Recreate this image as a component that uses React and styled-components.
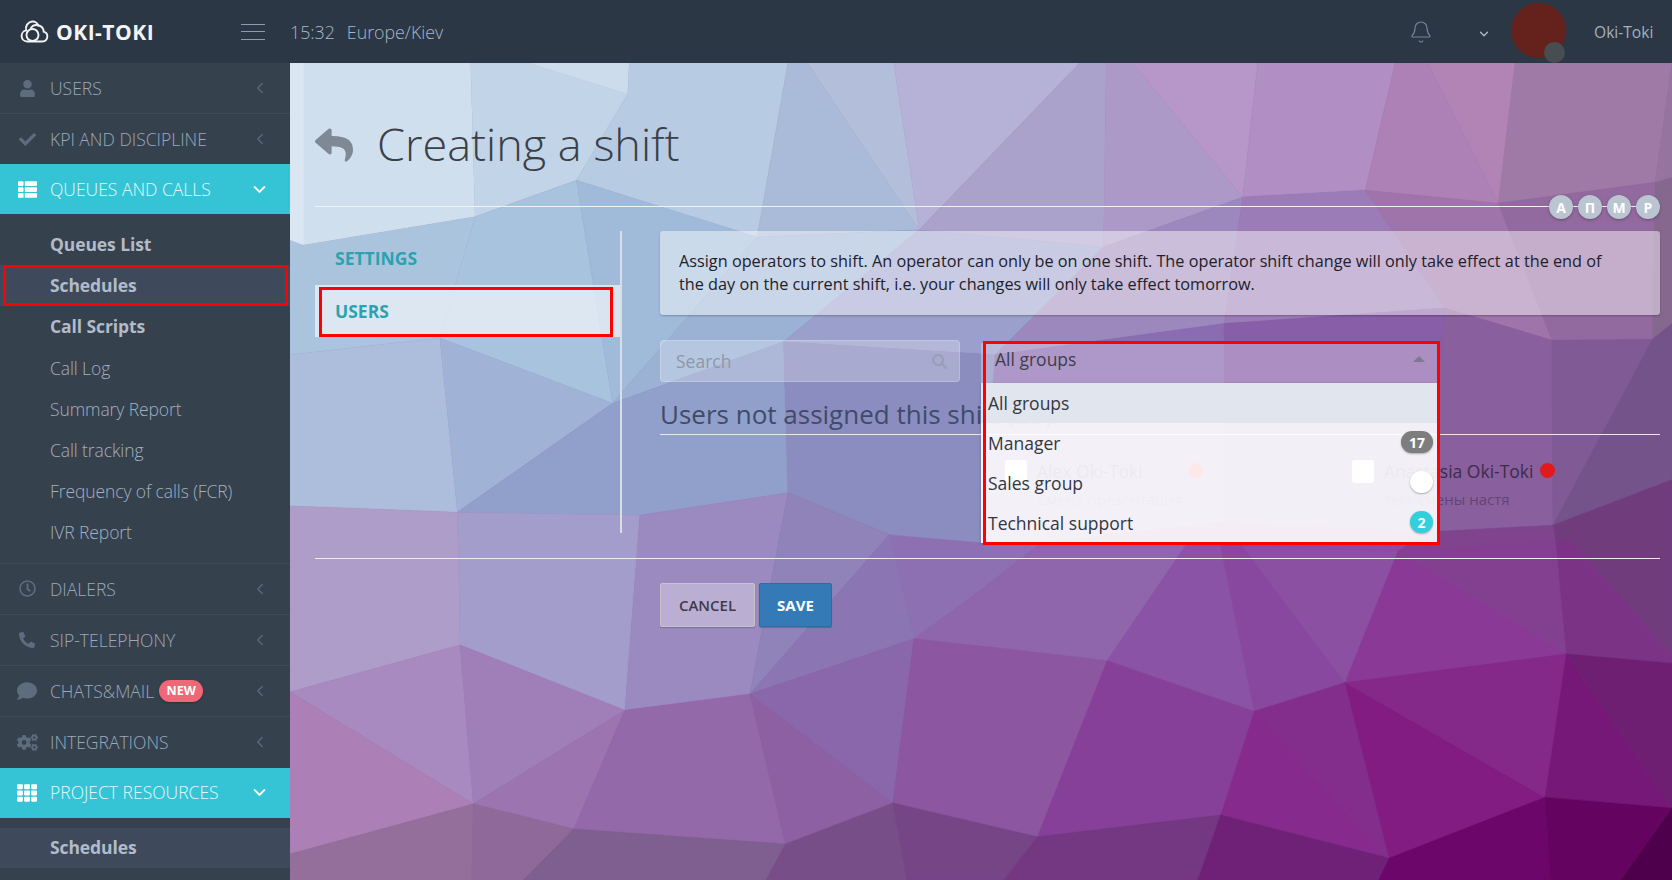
import React from 'react';
import styled, { createGlobalStyle } from 'styled-components';
import { ChevronLeft, ChevronDown, Bell } from 'lucide-react';
import { FaUser, FaCheck, FaThList, FaRegClock, FaPhoneAlt, FaComment, FaCogs, FaTh, FaReply, FaSearch } from 'react-icons/fa';

const Global = createGlobalStyle`
  html, body { margin: 0; padding: 0; height: 100%; overflow: hidden; }
  body { font-family: "Open Sans", "Liberation Sans", sans-serif; }
  * { box-sizing: border-box; }
`;

const Page = styled.div`display: grid; grid-template-rows: 63px 1fr; height: 880px; width: 1672px; overflow: hidden;`;
const TopBar = styled.header`display: flex; align-items: center; background: #2b3744; color: #9aa8b8;`;
const Logo = styled.div`width: 241px; display: flex; align-items: center; gap: 7px; padding-left: 20px; color: #f2f4f6; font-weight: 700; font-size: 21px; letter-spacing: .5px;`;
const Burger = styled.div`width: 24px; height: 16px; display: flex; flex-direction: column; justify-content: space-between; margin-top: 0;`;
const BurgerLine = styled.span`display: block; height: 1px; background: #8d9bab;`;
const Clock = styled.div`margin-left: 25px; margin-top: 1px; font-size: 17.8px; font-weight: 300; color: #a9b6c5; display: flex; gap: 12px; white-space: nowrap;`;
const TopRight = styled.div`margin-left: auto; display: flex; align-items: center; height: 100%;`;
const BellBtn = styled.span`color: #75849a; display: flex; margin-right: 44px;`;
const ChevBtn = styled.span`color: #b4bdc8; display: flex; margin-right: 20px; margin-top: 5px;`;
const Avatar = styled.div`position: relative; width: 55px; height: 55px; border-radius: 50%; background: #65211c; margin-top: -3px;`;
const AvatarDot = styled.span`position: absolute; right: 1px; bottom: -5px; width: 21px; height: 21px; border-radius: 50%; background: #474d50;`;
const UserName = styled.div`margin-left: 28px; width: 78px; font-size: 15.6px; font-weight: 400; color: #a4afbc; white-space: nowrap;`;

const Body = styled.div`display: grid; grid-template-columns: 290px 1fr; min-height: 0;`;
const Side = styled.nav`background: #36414e; overflow: hidden;`;
const MenuRow = styled.div`
  height: ${p => p.$h || 51}px; display: flex; align-items: center; position: relative;
  padding: 0 0 ${p => p.$up || 0}px 50px; font-size: 17.5px; font-weight: 300; text-transform: uppercase; white-space: nowrap; letter-spacing: 0;
  color: ${p => p.$active ? '#e6f8fa' : '#9aa9bc'};
  background: ${p => p.$active ? '#35c4d5' : 'transparent'};
  border-bottom: ${p => p.$flat ? 'none' : '1px solid #3e4a58'};
`;
const MenuIcon = styled.span`
  position: absolute; left: 16px; top: 0; bottom: 0; width: 22px; display: flex; align-items: center; justify-content: center;
  color: ${p => p.$active ? '#fff' : '#5f6c7e'}; font-size: ${p => p.$size || 18}px;
`;
const MenuArrow = styled.span`
  position: absolute; right: 21px; top: 0; bottom: 0; display: flex; align-items: center;
  color: ${p => p.$active ? '#fff' : '#5f6c7e'};
`;
const NewBadge = styled.span`
  margin-left: 5px; height: 22px; width: 44px; border-radius: 11px; background: #f06877; color: #fff; font-size: 12.5px; font-weight: 700;
  display: flex; align-items: center; justify-content: center; letter-spacing: 0; box-shadow: 0 1px 2px rgba(0,0,0,.25);
`;
const SubList = styled.div`padding: ${p => p.$pt || 10}px 0 ${p => p.$pb || 0}px;`;
const SubRow = styled.div`
  position: relative; height: ${p => p.$h || 41.1}px; display: flex; align-items: center; padding: 0 0 ${p => p.$bold ? 2 : 0}px 50px; white-space: nowrap;
  font-size: 17.5px; letter-spacing: -.1px;
  font-weight: ${p => p.$bold ? 700 : 300};
  color: ${p => p.$bold ? '#b3bbc9' : '#a3afbf'};
  background: ${p => p.$hl ? '#3e4a5b' : 'transparent'};
`;
const RedBox = styled.span`
  position: absolute; pointer-events: none; border: 3px solid #f00; z-index: 9;
  top: ${p => p.$t}px; left: ${p => p.$l}px; right: ${p => p.$r}px; bottom: ${p => p.$b}px;
`;

const Main = styled.main`position: relative; overflow: hidden; padding: 0 12px 0 25px; min-width: 0;`;
const Backdrop = styled.svg`position: absolute; left: 0; top: 0; width: 100%; height: 100%;`;
const Content = styled.div`position: relative;`;
const Heading = styled.div`position: relative; height: 144px; display: flex; align-items: center; gap: 24px; border-bottom: 1px solid #f3f1f8; padding-top: 10px;`;
const BackIcon = styled.span`display: flex; color: #7f8895; font-size: 38px; margin-top: 11px;`;
const Title = styled.h1`margin: 8px 0 0; font-size: 45px; font-weight: 300; color: #3b3f47; letter-spacing: 0;`;
const Letters = styled.div`position: absolute; right: 0; bottom: -13px; display: flex; gap: 5px;`;
const Letter = styled.span`
  width: 24px; height: 24px; border-radius: 50%; background: #bac5d1; color: #fff; font-size: 14px; font-weight: 700;
  display: flex; align-items: center; justify-content: center; box-shadow: 0 1px 3px rgba(0,0,0,.3);
`;
const Columns = styled.div`display: grid; grid-template-columns: 307px minmax(0, 1fr); column-gap: 38px; margin-top: 24px; height: 302px;`;
const Tabs = styled.div`border-right: 2px solid #d9dde6; height: 302px;`;
const Tab = styled.div`
  position: relative; height: ${p => p.$h}px; display: flex; align-items: center; padding-left: 20px; font-size: 17.5px; font-weight: 700; color: #2aa3af;
  background: ${p => p.$active ? 'rgba(255,255,255,.6)' : 'transparent'};
`;
const Panel = styled.div`position: relative; min-width: 0;`;
const Notice = styled.div`
  height: 84px; padding: 19px 40px 0 19px; border-radius: 3px; background: rgba(255,255,255,.46); font-size: 16.25px; line-height: 23px; color: #1d2129;
  box-shadow: 0 1px 2px rgba(0,0,0,.25);
`;
const Filters = styled.div`display: flex; gap: 21px; margin-top: 25px; align-items: flex-start;`;
const SearchBox = styled.div`
  width: 300px; height: 42px; border-radius: 4px; background: rgba(255,255,255,.26); border: 1px solid rgba(255,255,255,.2);
  display: flex; align-items: center; justify-content: space-between; padding: 0 12px 0 15px; font-size: 17.5px; color: #8f97a5;
`;
const SearchGlyph = styled.span`color: rgba(140,150,165,.55); display: flex; font-size: 15px;`;
const SelectWrap = styled.div`position: relative; width: 457px; margin-top: 2px; z-index: 5;`;
const SelectHead = styled.div`
  height: 41px; background: rgba(255,255,255,.3); display: flex; align-items: center; justify-content: space-between; padding: 0 13px 8px 14px;
  font-size: 17.5px; color: #3d3f4a; border-radius: 4px 4px 0 0;
`;
const Caret = styled.span`width: 0; height: 0; border-left: 6px solid transparent; border-right: 6px solid transparent; border-bottom: 6px solid #7d7a8c;`;
const DropList = styled.div`position: absolute; left: 0; right: 0; top: 41px; background: rgba(255,255,255,.9); box-shadow: 0 1px 3px rgba(0,0,0,.2);`;
const DropItem = styled.div`
  position: relative; height: 40px; display: flex; align-items: center; justify-content: space-between; padding: 0 5px 0 7px;
  font-size: 17.5px; color: #333740; background: ${p => p.$active ? '#e1e5ed' : 'transparent'};
`;
const CountPill = styled.span`
  min-width: 23px; height: 22px; padding: 0 ${p => p.$wide ? 8 : 0}px; border-radius: 11px; display: flex; align-items: center; justify-content: center; color: #fff; font-size: 14px; font-weight: 700;
  background: ${p => p.$bg}; box-shadow: 0 1px 2px rgba(0,0,0,.3); margin-top: ${p => p.$mt || 0}px;
`;
const UsersTitle = styled.div`
  margin-top: 9px; height: 43px; border-bottom: 1px solid #eae6f2; font-size: 26px; line-height: 44px; color: #3e4c69; white-space: nowrap;
`;
const UserGrid = styled.div`display: grid; grid-template-columns: 347px 1fr; padding-left: 345px; margin-top: 25px;`;
const UserCard = styled.div`display: grid; grid-template-columns: 32px auto; align-items: start;`;
const Check = styled.span`width: 22px; height: 23px; border-radius: 3px; background: #fff;`;
const UserName2 = styled.div`display: flex; align-items: flex-start; font-size: 17.5px; line-height: 22px; color: #3a2d4a; white-space: nowrap;`;
const Dot = styled.span`width: 15px; height: 15px; border-radius: 50%; background: #e01b1b; margin-top: 3px; margin-left: ${p => p.$gap}px;`;
const UserSub = styled.div`font-size: 15px; line-height: 20px; margin-top: 7px; color: rgba(60,45,75,.55); white-space: nowrap;`;
const Foot = styled.div`margin-top: 25px; border-top: 1px solid #efeaf4; padding: 24px 0 0 345px; display: flex; gap: 4px;`;
const Button = styled.button`
  height: 44px; width: ${p => p.$w}px; border-radius: 2px; font-family: inherit; font-size: 15px; text-transform: uppercase; padding: 0;
  color: ${p => p.$primary ? '#fff' : '#3f3b4a'}; background: ${p => p.$primary ? '#337ab7' : 'rgba(255,255,255,.32)'};
  border: 1px solid ${p => p.$primary ? '#2e6da4' : '#c8c4ca'};
  font-weight: ${p => p.$primary ? 700 : 600};
  box-shadow: 0 1px 1px rgba(0,0,0,.2);
`;

const polys = [
  ['0,0 205,0 210,295 15,350 0,340', '#cfdfee'], ['0,0 15,0 15,350 0,340', '#dae6f2'],
  ['205,0 270,0 383,60 325,225 210,295', '#c2d5e8'], ['270,0 385,0 383,60', '#cddcec'],
  ['385,0 565,0 530,334 325,225 383,60', '#b7cce2'], ['565,0 587,0 714,320 530,334', '#a9bbd8'],
  ['587,0 685,0 714,320', '#b3bedb'], ['685,0 896,0 714,320', '#b6b1d6'],
  ['896,0 926,0 923,353 714,320', '#aba2cc'], ['926,0 956,0 1081,257 923,353', '#ad99c8'],
  ['956,0 1098,0 1081,257', '#b796c9'], ['1098,0 1254,0 1220,244 1081,257', '#b18ec3'],
  ['1254,0 1291,0 1371,269 1220,244', '#ad80b6'], ['1291,0 1390,0 1371,269', '#b283b5'],
  ['1390,0 1568,0 1549,229 1371,269', '#a07aa6'], ['1568,0 1568,220 1549,229', '#96749f'],
  ['0,340 15,350 210,295 170,528 0,560', '#abc4de'], ['210,295 325,225 366,653 170,528', '#a8c3de'],
  ['325,225 530,334 366,653', '#a0bbda'], ['530,334 714,320 560,535 366,653', '#9cb2d5'],
  ['714,320 923,353 800,560 560,535', '#9a9fcb'], ['923,353 1081,257 1060,500 800,560', '#9d88bd'],
  ['1081,257 1220,244 1310,470 1060,500', '#9c7cb6'], ['1220,244 1371,269 1432,532 1310,470', '#9e74aa'],
  ['1371,269 1549,229 1546,530 1432,532', '#926a9f'], ['1549,229 1568,220 1568,500 1546,530', '#86688f'],
  ['0,560 170,528 190,862 0,850', '#acbedc'], ['170,528 366,653 190,862', '#a0b3d7'],
  ['366,653 560,535 565,825 397,868 190,862', '#919fcb'],
  ['680,905 853,920 783,1012 708,1105', '#8d70b2'],
  ['560,535 800,560 785,920 680,905 565,825', '#8b8dc0'],
  ['800,560 1060,500 1060,880 853,920 785,920', '#8b6cb2'], ['1060,500 1310,470 1290,900 1060,880', '#895ea8'],
  ['1310,470 1432,532 1433,887 1290,900', '#8a5f9e'], ['1432,532 1546,530 1433,887', '#7f5a94'],
  ['1546,530 1568,500 1568,800 1433,887', '#74528a'],
  ['0,850 190,862 193,1117 0,1207', '#ae9dc9'], ['190,862 397,868 380,1242 193,1117', '#a29dca'],
  ['397,868 565,825 522,1211 380,1242', '#9a8abf'], ['565,825 680,905 522,1211', '#8f83ba'],
  ['680,905 708,1105 522,1211', '#8b75b3'],
  ['708,1105 783,1012 853,920 1018,921 927,1147 794,1121', '#8f65ab'], ['1018,921 1055,921 1094,1244 927,1147', '#8a53a5'],
  ['1055,921 1078,921 1197,1189 1094,1244', '#88489f'], ['1078,921 1257,937 1197,1189', '#8b50a1'],
  ['853,920 1060,880 1290,900 1257,937 1018,921', '#8a4ea2'], ['1290,900 1433,887 1436,916 1257,937', '#80448f'],
  ['1257,937 1448,1134 1197,1189', '#8a3a96'], ['1257,937 1436,916 1448,1134', '#844090'],
  ['1436,916 1453,916 1568,1134 1568,1152 1448,1134', '#7a3385'], ['1433,887 1568,800 1568,1134 1453,916 1436,916', '#703c7c'],
  ['0,1207 193,1117 208,1422', '#a98ac0'], ['0,1207 208,1422 0,1518', '#ac80b6'],
  ['193,1117 380,1242 208,1422', '#a07fb8'], ['380,1242 322,1470 208,1422', '#9b74b0'],
  ['380,1242 522,1211 562,1499 322,1470', '#9369a9'], ['522,1211 684,1420 562,1499', '#8c60a2'],
  ['522,1211 708,1105 684,1420', '#8a66aa'], ['708,1105 794,1121 927,1147 848,1485 684,1420', '#8c56a0'],
  ['927,1147 1094,1244 1056,1443 848,1485', '#86409a'], ['1094,1244 1197,1189 1247,1526', '#832e8c'],
  ['1094,1244 1247,1526 1056,1443', '#862b8d'], ['1197,1189 1424,1409 1247,1526', '#821c82'],
  ['1197,1189 1448,1134 1424,1409', '#842889'], ['1448,1134 1424,1409 1568,1430', '#761878'],
  ['1448,1134 1568,1152 1568,1430', '#6e1f72'],
  ['0,1518 208,1422 206,1568 0,1568', '#946f9b'], ['208,1422 322,1470 265,1568 206,1568', '#8f6999'],
  ['322,1470 562,1499 540,1568 265,1568', '#7e5f90'], ['562,1499 684,1420 700,1568 540,1568', '#784e89'],
  ['684,1420 848,1485 810,1568 700,1568', '#764586'], ['848,1485 1056,1443 1030,1568 810,1568', '#743781'],
  ['1056,1443 1247,1526 1235,1568 1030,1568', '#6e2176'], ['1247,1526 1424,1409 1430,1568 1235,1568', '#6c066a'],
  ['1424,1409 1568,1430 1510,1568 1430,1568', '#640360'], ['1568,1430 1568,1568 1510,1568', '#4f004c'],
];

const CloudMark = () => (
  <svg width="29" height="23" viewBox="0 0 29 23" fill="none" stroke="#f2f4f6" strokeWidth="1.9">
    <path d="M7 21.5h15.5a5 5 0 0 0 1.2-9.8A7 7 0 0 0 10.5 8.8" />
    <path d="M7 21.5a5.6 5.6 0 0 1-.8-11.1A7 7 0 0 1 12 1.5a6.6 6.6 0 0 1 6.8 5" />
    <circle cx="12.5" cy="15" r="6" />
  </svg>
);

const Item = ({ icon, size, label, active, flat, badge, h, up }) => (
  <MenuRow $active={active} $flat={flat} $h={h} $up={up}>
    <MenuIcon $active={active} $size={size}>{icon}</MenuIcon>
    {label}
    {badge && <NewBadge>NEW</NewBadge>}
    <MenuArrow $active={active}>
      {active ? <ChevronDown size={19} strokeWidth={2.6} /> : <ChevronLeft size={18} strokeWidth={1.6} />}
    </MenuArrow>
  </MenuRow>
);

export default function App() {
  return (
    <>
      <Global />
      <Page>
        <TopBar>
          <Logo><CloudMark />OKI-TOKI</Logo>
          <Burger><BurgerLine /><BurgerLine /><BurgerLine /></Burger>
          <Clock><span>15:32</span><span>Europe/Kiev</span></Clock>
          <TopRight>
            <BellBtn><Bell size={24} strokeWidth={1.2} /></BellBtn>
            <ChevBtn><ChevronDown size={14} strokeWidth={2.2} /></ChevBtn>
            <Avatar><AvatarDot /></Avatar>
            <UserName>Oki-Toki</UserName>
          </TopRight>
        </TopBar>
        <Body>
          <Side>
            <Item icon={<FaUser />} size={17} label="Users" h={51} />
            <Item icon={<FaCheck />} size={17} label="KPI and discipline" h={50} flat />
            <Item icon={<FaThList />} size={19} label="Queues and calls" h={50} active flat />
            <SubList $pt={10} $pb={9.8}>
              <SubRow $bold>Queues List</SubRow>
              <SubRow $bold $hl>Schedules<RedBox $t={0} $l={3} $r={2} $b={0} /></SubRow>
              <SubRow $bold>Call Scripts</SubRow>
              <SubRow>Call Log</SubRow>
              <SubRow>Summary Report</SubRow>
              <SubRow>Call tracking</SubRow>
              <SubRow>Frequency of calls (FCR)</SubRow>
              <SubRow>IVR Report</SubRow>
            </SubList>
            <MenuRow $h={1} />
            <Item icon={<FaRegClock />} size={17} label="Dialers" />
            <Item icon={<FaPhoneAlt />} size={16} label="SIP-telephony" />
            <Item icon={<FaComment />} size={20} label="Chats&Mail" badge />
            <Item icon={<FaCogs />} size={21} label="Integrations" flat up={1} />
            <Item icon={<FaTh />} size={20} label="Project resources" h={50} active flat up={2} />
            <SubList>
              <SubRow $bold $hl $h={40}>Schedules</SubRow>
            </SubList>
          </Side>
          <Main>
            <Backdrop viewBox="0 0 1568 1568" preserveAspectRatio="none">
              <rect width="1568" height="1568" fill="#8a60a0" />
              {polys.map(([pts, fill], i) => <polygon key={i} points={pts} fill={fill} stroke={fill} strokeWidth="0.6" />)}
            </Backdrop>
            <Content>
              <Heading>
                <BackIcon><FaReply /></BackIcon>
                <Title>Creating a shift</Title>
                <Letters>
                  <Letter>А</Letter><Letter>П</Letter><Letter>М</Letter><Letter>Р</Letter>
                </Letters>
              </Heading>
              <Columns>
                <Tabs>
                  <Tab $h={54}>SETTINGS</Tab>
                  <Tab $h={52} $active>USERS<RedBox $t={2} $l={4} $r={7} $b={0} /></Tab>
                </Tabs>
                <Panel>
                  <Notice>Assign operators to shift. An operator can only be on one shift. The operator shift change will only take effect at the end of the day on the current shift, i.e. your changes will only take effect tomorrow.</Notice>
                  <Filters>
                    <SearchBox>Search<SearchGlyph><FaSearch /></SearchGlyph></SearchBox>
                    <SelectWrap>
                      <SelectHead>All groups<Caret /></SelectHead>
                      <DropList>
                        <DropItem $active>All groups</DropItem>
                        <DropItem>Manager<CountPill $bg="#7d7d7d" $wide $mt={-2}>17</CountPill></DropItem>
                        <DropItem>Sales group<CountPill $bg="#fff" $mt={-2} /></DropItem>
                        <DropItem>Technical support<CountPill $bg="#33cfdc" $mt={-2}>2</CountPill></DropItem>
                      </DropList>
                      <RedBox $t={-1} $l={2} $r={-2} $b={-162} />
                    </SelectWrap>
                  </Filters>
                  <UsersTitle>Users not assigned this shift (23)</UsersTitle>
                  <UserGrid>
                    <UserCard>
                      <Check />
                      <div>
                        <UserName2>Alex Oki-Toki<Dot $gap={45} /></UserName2>
                        <UserSub>Смена презентация</UserSub>
                      </div>
                    </UserCard>
                    <UserCard>
                      <Check />
                      <div>
                        <UserName2>Anastasia Oki-Toki<Dot $gap={6} /></UserName2>
                        <UserSub>тест смены настя</UserSub>
                      </div>
                    </UserCard>
                  </UserGrid>
                </Panel>
              </Columns>
              <Foot>
                <Button $w={95}>Cancel</Button>
                <Button $w={73} $primary>Save</Button>
              </Foot>
            </Content>
          </Main>
        </Body>
      </Page>
    </>
  );
}
